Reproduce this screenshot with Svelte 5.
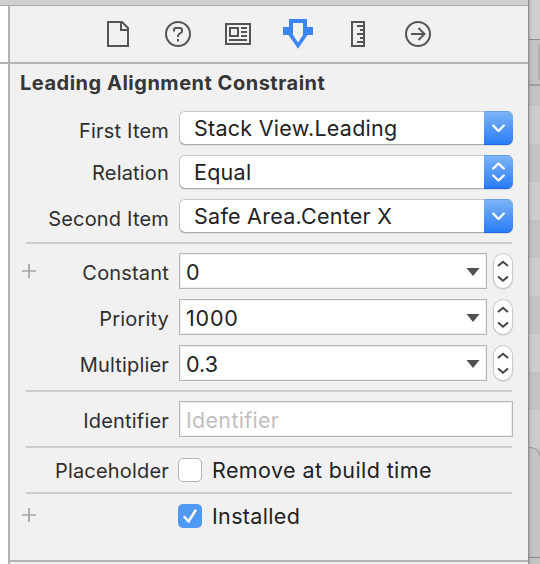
<script>
  const popups = [
    { label: 'First Item', value: 'Stack View.Leading', kind: 'menu', low: true },
    { label: 'Relation', value: 'Equal', kind: 'choice', low: false },
    { label: 'Second Item', value: 'Safe Area.Center X', kind: 'menu', low: true },
  ];
  const numbers = [
    { label: 'Constant', value: '0', plus: true },
    { label: 'Priority', value: '1000', plus: false },
    { label: 'Multiplier', value: '0.3', plus: false },
  ];
</script>

{#snippet plus()}
  <svg class="plus" width="14" height="14" viewBox="0 0 14 14"><path d="M7 0v14M0 7h14" stroke="#a3a3a3" stroke-width="1.7" /></svg>
{/snippet}

<div class="window">
  <div class="titlebar"></div>
  <div class="body">
    <div class="editor"><div class="rule"></div></div>
    <main class="panel">
      <nav>
        <svg width="518" height="56" viewBox="0 0 518 56" fill="none" stroke="#555" stroke-width="2">
          <path d="M98 16h14l6 6v18H98zM111 17v7h7" />
          <circle cx="168" cy="28" r="12" />
          <path d="M164 25.500V24q0-2 2-2h4q2 0 2 2v1q0 1-1 1.700l-1.800 1.300q-1.200.8-1.200 2v1M168 33v2.500" />
          <path d="M216 18h24v20h-24zM220 22h8v8h-8zM231 22h6M231 26h6M231 30h6M219 34h18" />
          <path fill="#3b85f6" fill-rule="evenodd" stroke="none" d="M279 13h18v8h6v8h-5.500L288 42.700 278.500 29H273v-8h6zM283 17v12l5 7.500 5-7.500V17z" />
          <path d="M342 16h12v24h-12zM347 20h6M350 24h3M347 28h6M350 32h3M347 36h6" />
          <circle cx="408" cy="28" r="12" />
          <path d="M401 28h13.500M408.500 22l6 6-6 6" />
        </svg>
      </nav>
      <section>
        <h1>Leading Alignment Constraint</h1>
        {#each popups as p}
          <div class="row popup-row">
            <div class="label" class:low={p.low}>{p.label}</div>
            <div class="popup">
              <span class="value">{p.value}</span>
              <span class="cap">
                <svg width="29" height="34" viewBox="0 0 29 34" fill="none" stroke="#fff" stroke-width="2.400" stroke-linecap="round" stroke-linejoin="round">
                  {#if p.kind === 'menu'}<path d="M9.200 14.500l5.300 5.500 5.300-5.500" />
                  {:else}<path d="M9.200 13.500l5.300-5 5.300 5M9.200 20.500l5.300 5 5.300-5" />{/if}
                </svg>
              </span>
            </div>
          </div>
        {/each}
        <hr class="first" />
        {#each numbers as n}
          <div class="row num-row">
            <div class="gutter">{#if n.plus}{@render plus()}{/if}</div>
            <div class="label">{n.label}</div>
            <div class="field combo"><span class:digits={n.value.length === 4}>{n.value}</span>
              <svg width="14" height="8" viewBox="0 0 14 8"><path d="M.5 0h13L7 8z" fill="#505050" /></svg>
            </div>
            <div class="stepper">
              <svg width="18" height="34" viewBox="0 0 18 34" fill="none" stroke="#444" stroke-width="2"><path d="M4 12l5-4.300 5 4.300M4 22.500l5 4.300 5-4.300" /></svg>
            </div>
          </div>
        {/each}
        <hr class="second" />
        <div class="row id-row">
          <div class="label">Identifier</div>
          <div class="field wide"><span class="hint">Identifier</span></div>
        </div>
        <hr />
        <div class="row check-row">
          <div class="label">Placeholder</div>
          <span class="box"></span><span class="text remove">Remove at build time</span>
        </div>
        <hr />
        <div class="row check-row">
          <div class="gutter">{@render plus()}</div>
          <div class="label"></div>
          <span class="box on"><svg width="24" height="24" viewBox="0 0 24 24"><path d="M6.500 13l4 4.500L17.500 6.500" fill="none" stroke="#fff" stroke-width="2.500" stroke-linecap="round" stroke-linejoin="round" /></svg></span>
          <span class="text">Installed</span>
        </div>
      </section>
      <footer></footer>
    </main>
    <aside>
      <svg width="12" height="564" viewBox="0 0 12 564">
        <defs>
          <linearGradient id="edge"><stop offset="0" stop-color="#000" stop-opacity=".3" /><stop offset=".4" stop-color="#000" stop-opacity=".06" /><stop offset="1" stop-color="#000" stop-opacity="0" /></linearGradient>
        </defs>
        <rect width="12" height="564" fill="#c3c3c3" />
        <rect width="12" height="39" fill="#cecece" />
        {#each [106, 182, 258, 334, 410] as y}<rect {y} width="12" height="38" fill="#cdcdcd" />{/each}
        <rect y="39" width="12" height="1" fill="#8e8e8e" />
        <rect x="10" y="44" width="2" height="36" fill="#b0b0b0" />
        <rect y="84" width="12" height="2" fill="#a0a0a0" />
        <path d="M0 447.500h3q8 1 9 9" fill="none" stroke="#999" />
        <rect y="557" width="12" height="1" fill="#888" />
        <rect width="5" height="564" fill="url(#edge)" />
        <rect width="1" height="564" fill="#8e8e8e" />
      </svg>
    </aside>
  </div>
</div>

<style>
  :global(body) { margin: 0; }
  * { box-sizing: border-box; }
  .window { width: 540px; height: 564px; overflow: hidden; background: #f1f1f1; font-family: Inter, "Liberation Sans", sans-serif; color: #222; display: flex; flex-direction: column; white-space: nowrap; }
  .titlebar { width: 528px; height: 6px; flex: none; background: #d1cfd1; border-bottom: 1px solid #a8a8a8; }
  .body { display: flex; height: 558px; }
  .editor { width: 10px; background: #fff; border-right: 2px solid #b3b3b3; padding-top: 56px; }
  .rule { height: 2px; background: #b3b3b3; }
  .panel { width: 518px; display: flex; flex-direction: column; }
  nav { height: 58px; border-bottom: 2px solid #b3b3b3; }
  nav svg { display: block; }
  section { height: 496px; display: flex; flex-direction: column; padding: 0 15px 0 10px; }
  h1 { margin: 0; height: 47px; padding-top: 6px; font-size: 20px; line-height: 26px; font-weight: 700; letter-spacing: .51px; color: #363636; }
  .row { display: flex; align-items: flex-start; flex: none; }
  .popup-row { height: 44px; }
  .label { width: 149px; margin-right: 10px; text-align: right; font-size: 20px; line-height: 36px; letter-spacing: .18px; color: #2e2e2e; }
  .gutter + .label { width: 133px; }
  .num-row .label, .id-row .label { padding-top: 2px; }
  .gutter { width: 16px; padding: 11px 0 0 2px; }
  .plus { display: block; }
  .low { padding-top: 2px; }
  .popup { display: flex; justify-content: space-between; width: 334px; height: 34px; border-radius: 6px; background: #fff; box-shadow: inset 0 -1px #aaa, inset 0 0 0 1px #c6c6c6, 0 1px 1px #ddd; overflow: hidden; }
  .value { padding-left: 15px; font-size: 21.5px; line-height: 34px; letter-spacing: .26px; }
  .cap { width: 29px; background: linear-gradient(#7cb3f5, #2a7cf7); border-top: 1px solid #669ff0; border-bottom: 1px solid #1e66e8; }
  .cap svg { display: block; margin-top: -1px; }
  hr { flex: none; width: 486px; height: 2px; border: 0; margin: 0 0 0 6px; background: #ccc; }
  .first { margin-top: -1px; margin-bottom: 9px; }
  .num-row { height: 46px; }
  .field { height: 36px; background: #fff; border: 1px solid #b5b5b5; box-shadow: inset 0 0 0 1px #f0f0f0; font-size: 21.5px; line-height: 36px; padding-left: 6px; }
  .combo { width: 308px; display: flex; justify-content: space-between; padding-right: 6px; }
  .combo svg { margin-top: 14px; }
  .digits { letter-spacing: .8px; }
  .stepper { width: 18px; height: 34px; margin: 1px 0 0 7px; border-radius: 9px; background: #fff; box-shadow: 0 0 0 1px #cbcbcb, 0 1px 2px #aaa; }
  .stepper svg { display: block; }
  .wide { width: 334px; }
  .hint { color: #bfbfbf; letter-spacing: .3px; }
  .second { margin-top: -1px; margin-bottom: 9px; }
  .id-row { height: 45px; }
  .check-row { height: 44px; padding-top: 10px; }
  .check-row .label { line-height: 26px; }
  .check-row .gutter { padding-top: 4px; }
  .box { width: 24px; height: 24px; margin-left: -1px; border-radius: 5px; background: #fff; border: 1px solid #b5b5b5; }
  .on { background: #4f98f4; border: 0; }
  .on svg { display: block; }
  .text { font-size: 21.5px; line-height: 25px; margin-left: 10px; letter-spacing: .33px; }
  .remove { letter-spacing: .4px; }
  footer { height: 4px; border-top: 2px solid #b3b3b3; }
  aside { width: 12px; margin-top: -6px; height: 564px; }
  aside svg { display: block; }
</style>
